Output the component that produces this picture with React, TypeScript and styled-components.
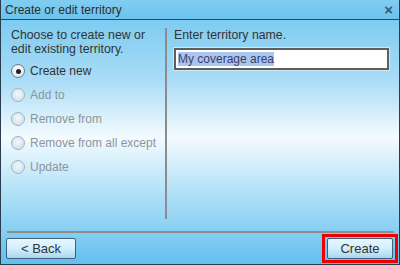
import styled, { createGlobalStyle } from "styled-components";

const GlobalStyle = createGlobalStyle`
  html, body {
    margin: 0;
    padding: 0;
    width: 400px;
    height: 265px;
    overflow: hidden;
    font-family: "Liberation Sans", Arial, sans-serif;
  }
`;

const Dialog = styled.div`
  box-sizing: border-box;
  width: 400px;
  height: 265px;
  display: flex;
  flex-direction: column;
  border: 1px solid #2a3d4f;
  border-top: none;
  background: linear-gradient(
    to bottom,
    #6fc6f0 0%,
    #a8dcf6 30%,
    #f4fbff 52%,
    #b4e2f8 72%,
    #62bfee 100%
  );
`;

const TitleBar = styled.div`
  height: 19px;
  flex-shrink: 0;
  display: flex;
  align-items: center;
  justify-content: space-between;
  padding: 0 6px 0 4px;
  background: linear-gradient(to bottom, #80cdf0, #6cc3ee);
  border-bottom: 1px solid #2a4a62;
  color: #2d2d2d;
  font-size: 12px;
`;

const Close = styled.span`
  font-size: 15px;
  font-weight: bold;
  color: #3c5566;
  line-height: 1;
`;

const Body = styled.div`
  flex: 1;
  display: flex;
  padding: 8px 10px 0 10px;
`;

const LeftPane = styled.div`
  width: 156px;
  border-right: 2px solid #8c8c8c;
  margin-bottom: 12px;
`;

const Prompt = styled.p`
  margin: 0 0 3px 0;
  font-size: 12.3px;
  line-height: 14px;
  color: #333;
`;

const RadioList = styled.ul`
  list-style: none;
  margin: 0;
  padding: 0;
`;

const RadioRow = styled.li<{ $disabled?: boolean }>`
  display: flex;
  align-items: center;
  gap: 5px;
  height: 24px;
  font-size: 12px;
  color: ${(p) => (p.$disabled ? "#8c959c" : "#333")};
`;

const RadioDot = styled.span<{ $checked?: boolean; $disabled?: boolean }>`
  box-sizing: border-box;
  width: 14px;
  height: 14px;
  border-radius: 50%;
  border: 1px solid ${(p) => (p.$disabled ? "#9fb4c2" : "#6b7d8a")};
  background: ${(p) =>
    p.$disabled
      ? "radial-gradient(circle at 50% 40%, #f2f8fc, #c8dbe6)"
      : "radial-gradient(circle at 50% 40%, #ffffff, #d6e2ea)"};
  display: flex;
  align-items: center;
  justify-content: center;
  &::after {
    content: "";
    width: 5px;
    height: 5px;
    border-radius: 50%;
    background: #222;
    display: ${(p) => (p.$checked ? "block" : "none")};
  }
`;

const RightPane = styled.div`
  flex: 1;
  padding: 0 0 0 7px;
`;

const FieldLabel = styled.div`
  font-size: 12.3px;
  color: #333;
  line-height: 14px;
  margin-bottom: 6px;
`;

const NameInput = styled.div`
  box-sizing: border-box;
  height: 22px;
  width: 215px;
  background: #fff;
  border: 2px solid #5e5e5e;
  box-shadow: 0 0 0 1px #cfe6f3;
  display: flex;
  align-items: center;
  padding-left: 2px;
  font-size: 12px;
  color: #3c3c6a;
`;

const Selected = styled.span`
  background: #a9c7ee;
`;

const Separator = styled.div`
  margin: 0 5px 0 6px;
  height: 2px;
  background: #8c8c8c;
  flex-shrink: 0;
`;

const ButtonRow = styled.div`
  height: 31px;
  flex-shrink: 0;
  display: flex;
  align-items: center;
  justify-content: space-between;
  padding: 0 1px 0 5px;
`;

const Button = styled.button<{ $width: number }>`
  box-sizing: border-box;
  width: ${(p) => p.$width}px;
  height: 21px;
  padding: 0;
  border: 1px solid #3d5f80;
  border-radius: 2px;
  background: linear-gradient(to bottom, #e6f7ff 0%, #d2effc 50%, #a9d6f0 100%);
  font-family: "Liberation Sans", Arial, sans-serif;
  font-size: 13px;
  color: #333;
`;

const Highlight = styled.div`
  border: 3px solid #ee0000;
  padding: 1px 2px;
  display: flex;
`;

const options = [
  { label: "Create new", checked: true },
  { label: "Add to", disabled: true },
  { label: "Remove from", disabled: true },
  { label: "Remove from all except", disabled: true },
  { label: "Update", disabled: true },
];

export default function App() {
  return (
    <>
      <GlobalStyle />
      <Dialog>
        <TitleBar>
          <span>Create or edit territory</span>
          <Close>×</Close>
        </TitleBar>
        <Body>
          <LeftPane>
            <Prompt>
              Choose to create new or
              <br />
              edit existing territory.
            </Prompt>
            <RadioList>
              {options.map((o) => (
                <RadioRow key={o.label} $disabled={o.disabled}>
                  <RadioDot $checked={o.checked} $disabled={o.disabled} />
                  {o.label}
                </RadioRow>
              ))}
            </RadioList>
          </LeftPane>
          <RightPane>
            <FieldLabel>Enter territory name.</FieldLabel>
            <NameInput>
              <Selected>My coverage area</Selected>
            </NameInput>
          </RightPane>
        </Body>
        <Separator />
        <ButtonRow>
          <Button $width={70}>&lt; Back</Button>
          <Highlight>
            <Button $width={66}>Create</Button>
          </Highlight>
        </ButtonRow>
      </Dialog>
    </>
  );
}
